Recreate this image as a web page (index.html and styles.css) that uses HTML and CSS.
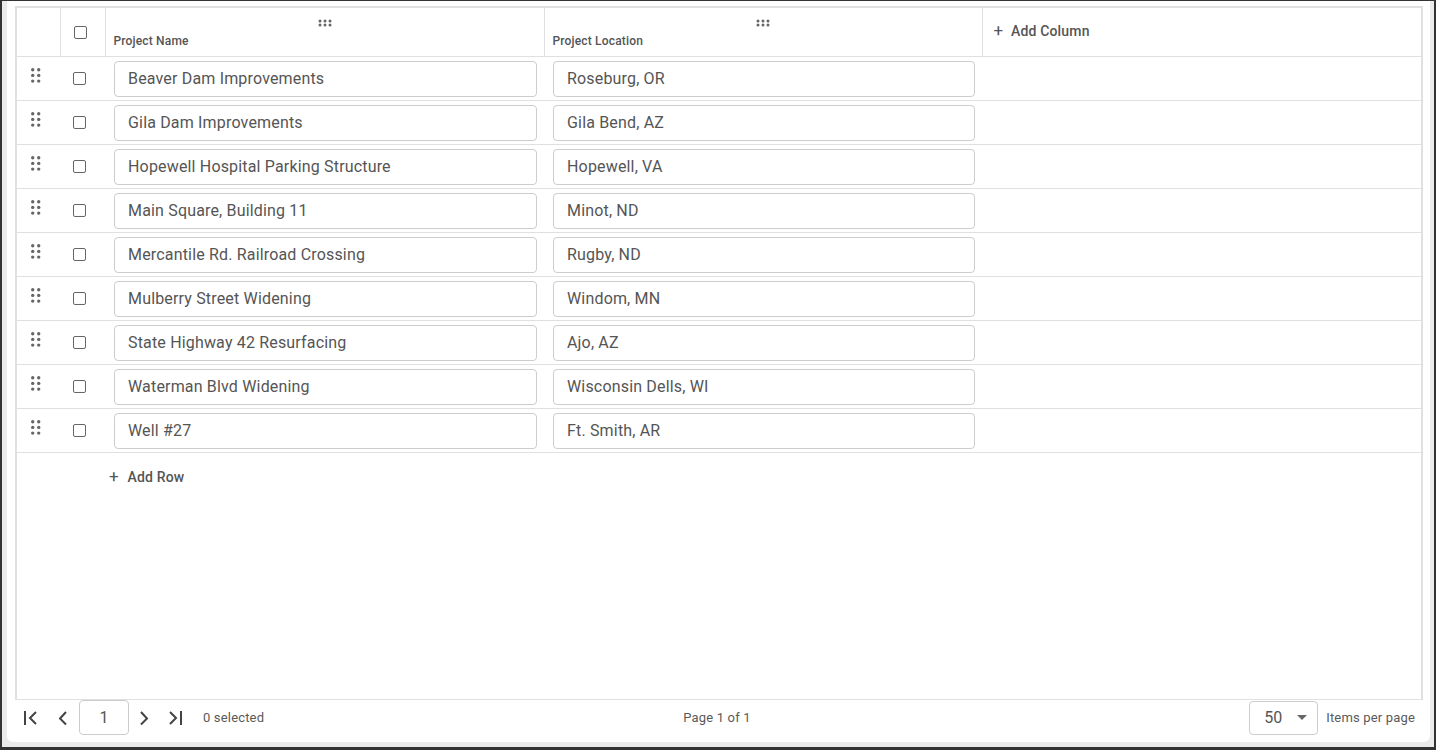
FILE: index.html
```html
<!DOCTYPE html>
<html lang="en">
<head>
    <meta charset="UTF-8">
    <meta name="viewport" content="width=device-width, initial-scale=1.0">
    <title>Projects</title>
    <link rel="stylesheet" href="styles.css">
</head>
<body>
    <div class="card">
        <div class="grid">
            <table class="sheet">
                <colgroup>
                    <col class="col-drag">
                    <col class="col-check">
                    <col class="col-field">
                    <col class="col-field2">
                    <col>
                </colgroup>
                <thead>
                    <tr>
                        <th></th>
                        <th class="check-cell"><input type="checkbox" class="box"></th>
                        <th class="field-head">
                            <svg class="grip" width="14" height="8" viewBox="0 0 14 8"><g fill="#666"><circle cx="2" cy="2" r="1.5"/><circle cx="7" cy="2" r="1.5"/><circle cx="12" cy="2" r="1.5"/><circle cx="2" cy="6" r="1.5"/><circle cx="7" cy="6" r="1.5"/><circle cx="12" cy="6" r="1.5"/></g></svg>
                            <span>Project Name</span>
                        </th>
                        <th class="field-head">
                            <svg class="grip" width="14" height="8" viewBox="0 0 14 8"><g fill="#666"><circle cx="2" cy="2" r="1.5"/><circle cx="7" cy="2" r="1.5"/><circle cx="12" cy="2" r="1.5"/><circle cx="2" cy="6" r="1.5"/><circle cx="7" cy="6" r="1.5"/><circle cx="12" cy="6" r="1.5"/></g></svg>
                            <span>Project Location</span>
                        </th>
                        <th class="add-col"><span class="add-label"><span class="plus">+</span> Add Column</span></th>
                    </tr>
                </thead>
                <tbody id="rows"></tbody>
            </table>
            <div class="add-row"><span class="plus">+</span> Add Row</div>
        </div>

        <div class="pager">
            <div class="pager-left">
                <button class="nav"><svg width="16" height="16" viewBox="0 0 16 16"><path d="M2 1v14M13 2L7 8l6 6" fill="none" stroke="#444" stroke-width="2"/></svg></button>
                <button class="nav"><svg width="16" height="16" viewBox="0 0 16 16"><path d="M11 2L5 8.5l6 6" fill="none" stroke="#444" stroke-width="2"/></svg></button>
                <input class="page-box" type="text" value="1">
                <button class="nav"><svg width="16" height="16" viewBox="0 0 16 16"><path d="M5 2l6 6.5-6 6" fill="none" stroke="#444" stroke-width="2"/></svg></button>
                <button class="nav"><svg width="16" height="16" viewBox="0 0 16 16"><path d="M2 2l6 6-6 6M13 1v14" fill="none" stroke="#444" stroke-width="2"/></svg></button>
                <span class="muted">0 selected</span>
            </div>
            <div class="muted">Page 1 of 1</div>
            <div class="pager-right">
                <div class="size-box">50 <span class="caret"></span></div>
                <span class="muted">Items per page</span>
            </div>
        </div>
    </div>

<script>
const projects = [
    ['Beaver Dam Improvements', 'Roseburg, OR'],
    ['Gila Dam Improvements', 'Gila Bend, AZ'],
    ['Hopewell Hospital Parking Structure', 'Hopewell, VA'],
    ['Main Square, Building 11', 'Minot, ND'],
    ['Mercantile Rd. Railroad Crossing', 'Rugby, ND'],
    ['Mulberry Street Widening', 'Windom, MN'],
    ['State Highway 42 Resurfacing', 'Ajo, AZ'],
    ['Waterman Blvd Widening', 'Wisconsin Dells, WI'],
    ['Well #27', 'Ft. Smith, AR']
];

const dragIcon = '<svg width="10" height="16" viewBox="0 0 10 16"><g fill="#666">' +
    '<circle cx="1.7" cy="1.7" r="1.7"/><circle cx="7.7" cy="1.7" r="1.7"/>' +
    '<circle cx="1.7" cy="7.4" r="1.7"/><circle cx="7.7" cy="7.4" r="1.7"/>' +
    '<circle cx="1.7" cy="13.1" r="1.7"/><circle cx="7.7" cy="13.1" r="1.7"/></g></svg>';

const body = document.getElementById('rows');
projects.forEach(([name, location]) => {
    const tr = document.createElement('tr');
    tr.innerHTML = `
        <td class="drag-cell">${dragIcon}</td>
        <td class="check-cell"><input type="checkbox" class="box"></td>
        <td class="field"><input class="text" type="text" value="${name}"></td>
        <td class="field field2"><input class="text" type="text" value="${location}"></td>
        <td></td>
    `;
    body.appendChild(tr);
});
</script>
</body>
</html>
```

FILE: styles.css
```css
html { background: #333; }
body { margin: 1px 2px 3px 2px; height: 746px; background: #ebebeb; font-family: Roboto, "Liberation Sans", Arial, sans-serif; color: #5a5a5a; letter-spacing: 0.17px; box-sizing: border-box; }
.card { margin: 0 4px 0 5px; height: 741px; background: #fff; border-radius: 0 0 6px 6px; padding: 5px 0 0 8px; box-sizing: border-box; }
.grid { width: 1408px; height: 694px; border: 2px solid #e0e0e0; border-bottom-width: 1px; box-sizing: border-box; }

.sheet { width: 100%; table-layout: fixed; border-collapse: collapse; }
.col-drag { width: 43px; }
.col-check { width: 45px; }
.col-field { width: 439px; }
.col-field2 { width: 438px; }
.sheet th, .sheet td { padding: 0; border-bottom: 1px solid #e0e0e0; }
.sheet th { height: 48px; border-right: 1px solid #e0e0e0; text-align: left; font-weight: 500; vertical-align: top; }
.sheet th:last-child { border-right: none; }
.sheet td { height: 43px; vertical-align: middle; }

.box { appearance: none; -webkit-appearance: none; display: block; width: 13px; height: 13px; margin: 0 0 0 13px; border: 1px solid #666; border-radius: 2px; background: #fff; box-sizing: border-box; }
.sheet th.check-cell { vertical-align: middle; }

.field-head { font-size: 12px; color: #555; }
.field-head .grip { display: block; margin: 11px auto 0; }
.field-head span { display: block; padding: 7px 0 0 8px; }

.add-col { font-size: 14px; color: #555; padding-left: 11px !important; }
.add-label { display: block; margin-top: 12px; }
.plus { font-size: 17px; font-weight: 400; margin-right: 4px; }

.drag-cell svg { display: block; margin: -6px 0 0 14px; }
.field { padding: 0 7px 0 9px !important; }
.text { display: block; width: 100%; height: 36px; box-sizing: border-box; border: 1px solid #cdcdcd; border-radius: 4px; padding: 0 13px; font-family: Roboto, "Liberation Sans", Arial, sans-serif; font-size: 16px; letter-spacing: 0.17px; color: #555; background: #fff; }

.add-row { padding: 13px 0 0 92px; font-size: 14px; font-weight: 500; color: #555; }
.add-row .plus { margin-right: 5px; }

.pager { display: grid; grid-template-columns: 1fr auto 1fr; align-items: center; height: 35px; margin-left: -8px; padding: 0 15px 0 12px; font-size: 13px; }
.pager-left { display: flex; align-items: center; }
.pager-right { display: flex; align-items: center; justify-content: flex-end; }
.nav { width: 24px; height: 35px; padding: 0; border: none; background: none; display: flex; align-items: center; justify-content: center; margin-right: 8px; }
.nav:nth-child(2) { margin-right: 4px; }
.page-box { width: 50px; height: 35px; box-sizing: border-box; border: 1px solid #ccc; border-radius: 4px; text-align: center; font-family: inherit; font-size: 16px; color: #555; margin-right: 3px; }
.muted { color: #5a5a5a; }
.pager-left .muted { margin-left: 7px; }
.size-box { width: 69px; height: 34px; box-sizing: border-box; border: 1px solid #ccc; border-radius: 4px; display: flex; align-items: center; padding-left: 14px; font-size: 16px; color: #555; margin-right: 8px; }
.caret { width: 0; height: 0; border-left: 5px solid transparent; border-right: 5px solid transparent; border-top: 5px solid #666; margin-left: 14px; }
```
